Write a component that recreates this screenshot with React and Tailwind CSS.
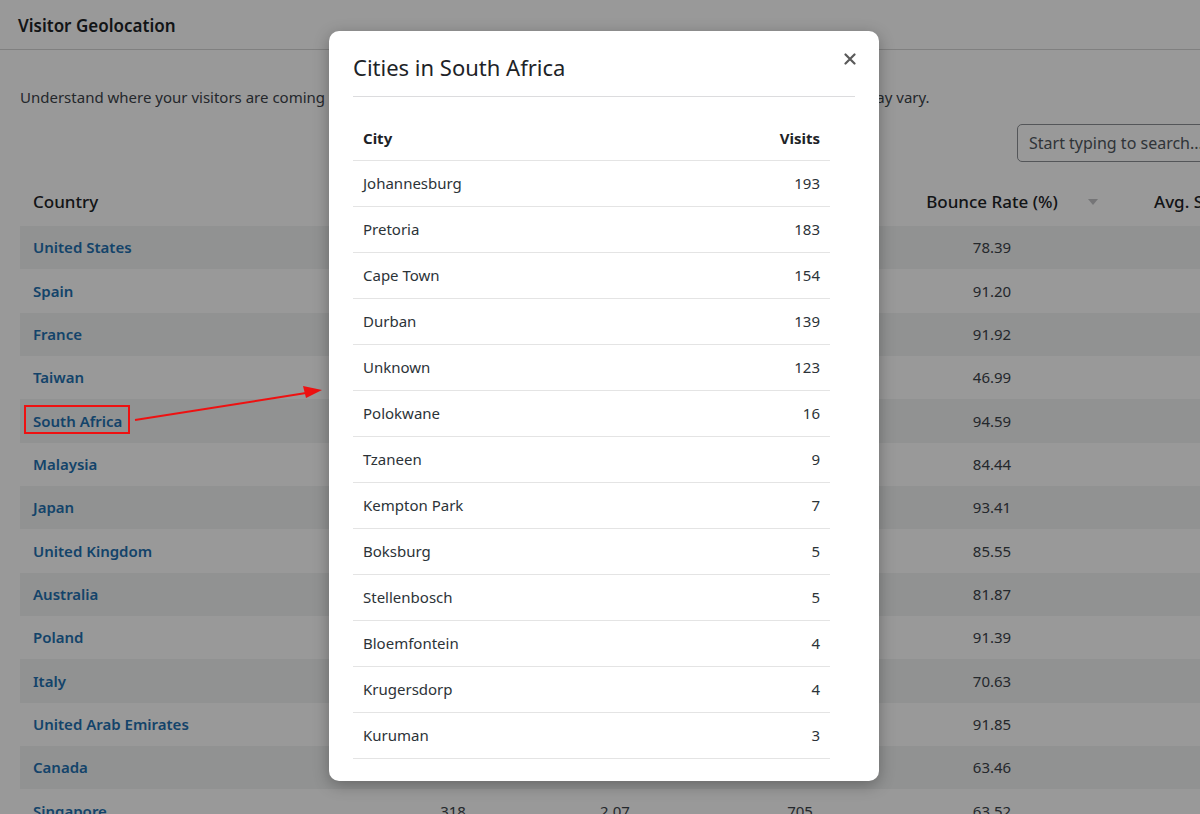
import React from "react";

const countries = [
  ["United States", "1,204", "2.31", "2,781", "78.39"],
  ["Spain", "964", "1.42", "1,369", "91.20"],
  ["France", "912", "1.38", "1,258", "91.92"],
  ["Taiwan", "874", "3.12", "2,727", "46.99"],
  ["South Africa", "834", "1.21", "1,009", "94.59"],
  ["Malaysia", "712", "1.62", "1,153", "84.44"],
  ["Japan", "655", "1.33", "871", "93.41"],
  ["United Kingdom", "601", "1.58", "950", "85.55"],
  ["Australia", "548", "1.74", "954", "81.87"],
  ["Poland", "497", "1.36", "676", "91.39"],
  ["Italy", "455", "2.08", "946", "70.63"],
  ["United Arab Emirates", "402", "1.28", "515", "91.85"],
  ["Canada", "377", "2.11", "795", "63.46"],
  ["Singapore", "318", "2.07", "705", "63.52"],
];

const cities = [
  ["Johannesburg", 193],
  ["Pretoria", 183],
  ["Cape Town", 154],
  ["Durban", 139],
  ["Unknown", 123],
  ["Polokwane", 16],
  ["Tzaneen", 9],
  ["Kempton Park", 7],
  ["Boksburg", 5],
  ["Stellenbosch", 5],
  ["Bloemfontein", 4],
  ["Krugersdorp", 4],
  ["Kuruman", 3],
];

export default function App() {
  return (
    <div
      className="relative w-[1200px] h-[814px] overflow-hidden bg-white text-[#3c434a]"
      style={{ fontFamily: '"Noto Sans", "Open Sans", sans-serif' }}
    >
      {/* Page */}
      <div className="h-[50px] border-b border-[#d5d5d5] px-[18px] flex items-center">
        <h1 className="text-[17px] font-semibold text-[#1d2327] leading-none mt-[1px]">Visitor Geolocation</h1>
      </div>
      <div className="pl-5 pt-[35px] w-[1400px]">
        <p className="text-[15px] leading-[24px] whitespace-nowrap">
          Understand where your visitors are coming from. Location is detected from each visitor's IP address, so actual accuracy may vary.
        </p>
        <div className="flex mt-[15px] pl-[997px]">
          <div className="w-[223px] h-[38px] shrink-0 rounded-[5px] border border-[#8c8f94] flex items-center px-[11px] text-[16px] text-[#50575e] whitespace-nowrap">
            Start typing to search...
          </div>
        </div>
        <div className="mt-[16px]">
          <div className="flex h-[48px] items-center text-[17px] font-medium text-[#1d2327] whitespace-nowrap">
            <div className="w-[350px] shrink-0 pl-[13px]">Country</div>
            <div className="w-[166px] shrink-0 text-center">Visitors</div>
            <div className="w-[158px] shrink-0 text-center">Pages / Visit</div>
            <div className="w-[212px] shrink-0 text-center">Pageviews</div>
            <div className="w-[202px] shrink-0 pr-[30px] text-center relative">
              Bounce Rate (%)
              <span className="absolute right-[10px] top-[10px] w-0 h-0 border-l-[5px] border-r-[5px] border-t-[6px] border-l-transparent border-r-transparent border-t-[#c3c4c7]" />
            </div>
            <div className="w-[300px] shrink-0 pl-[46px]">Avg. Session Duration</div>
          </div>
          {countries.map((c, i) => (
            <div
              key={c[0]}
              className={`flex w-[1180px] h-[43.33px] items-center text-[15px] whitespace-nowrap ${i % 2 === 0 ? "bg-[#f2f3f3]" : ""}`}
            >
              <div className="w-[350px] shrink-0 pl-[13px] font-semibold text-[#2271b1]">{c[0]}</div>
              <div className="w-[166px] shrink-0 text-center">{c[1]}</div>
              <div className="w-[158px] shrink-0 text-center">{c[2]}</div>
              <div className="w-[212px] shrink-0 text-center">{c[3]}</div>
              <div className="w-[202px] shrink-0 pr-[30px] text-center">{c[4]}</div>
            </div>
          ))}
        </div>
      </div>

      {/* Overlay */}
      <div className="absolute inset-0 bg-black/40" />

      {/* Annotation */}
      <svg className="absolute inset-0 pointer-events-none" width="1200" height="814">
        <rect x="25" y="406" width="104" height="27" fill="none" stroke="#ee1111" strokeWidth="2" />
        <line x1="135" y1="420" x2="306" y2="393" stroke="#ee1111" strokeWidth="2" />
        <polygon points="322,390 303,386 306,398" fill="#ee1111" />
      </svg>

      {/* Modal */}
      <div className="absolute left-[329px] top-[31px] w-[550px] h-[750px] bg-white rounded-[10px] shadow-[0_4px_16px_rgba(0,0,0,0.3)] px-6">
        <div className="h-[66px] flex items-end border-b border-[#dcdcde] pb-[18px]">
          <h2 className="text-[22px] text-[#1d2327] leading-none">Cities in South Africa</h2>
        </div>
        <button className="absolute right-[22px] top-[21px] w-[14px] h-[14px] flex items-center justify-center">
          <svg width="12" height="12" viewBox="0 0 12 12">
            <path d="M1.5 1.5 L10.5 10.5 M10.5 1.5 L1.5 10.5" stroke="#5a5a5a" strokeWidth="2.2" strokeLinecap="round" />
          </svg>
        </button>
        <div className="w-[477px] mt-[20px] text-[15px]">
          <div className="flex h-[44px] items-center justify-between px-[10px] border-b border-[#e4e4e4] font-bold text-[#1d2327]">
            <span>City</span>
            <span>Visits</span>
          </div>
          {cities.map(([name, v]) => (
            <div key={name} className="flex h-[46px] items-center justify-between px-[10px] border-b border-[#e4e4e4] text-[#2c3338]">
              <span>{name}</span>
              <span>{v}</span>
            </div>
          ))}
        </div>
      </div>
    </div>
  );
}
